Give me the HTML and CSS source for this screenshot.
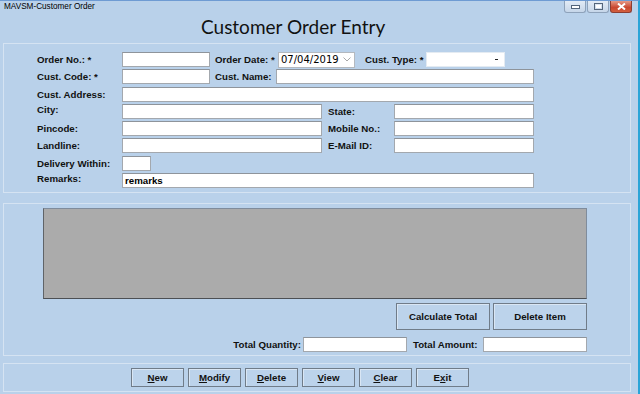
FILE: index.html
```html
<!DOCTYPE html>
<html lang="en">
<head>
    <meta charset="UTF-8">
    <title>MAVSM-Customer Order</title>
    <link rel="stylesheet" href="styles.css">
</head>
<body>

<div class="window">
    <div class="titlebar">
        <span class="caption">MAVSM-Customer Order</span>
        <div class="controls">
            <span class="ctl">
                <svg width="9" height="4" viewBox="0 0 9 4"><rect x="0.5" y="0.5" width="8" height="3" fill="#fff" stroke="#54657a"/></svg>
            </span>
            <span class="ctl">
                <svg width="9" height="7" viewBox="0 0 9 7"><rect x="0.5" y="0.5" width="8" height="6" fill="none" stroke="#54657a"/><rect x="2" y="2" width="5" height="3" fill="#fff"/></svg>
            </span>
            <span class="ctl close">
                <svg width="9" height="7" viewBox="0 0 9 7"><path d="M1 0.5 L8 6.5 M8 0.5 L1 6.5" stroke="#fff" stroke-width="2"/></svg>
            </span>
        </div>
    </div>

    <h1 class="heading">Customer Order Entry</h1>

    <!-- customer details -->
    <div class="group details">
        <div class="row">
            <label class="lbl w85">Order No.: *</label>
            <input class="box w88" type="text">
            <label class="lbl ml5 w63">Order Date: *</label>
            <div class="date">
                <span>07/04/2019</span>
                <svg width="8" height="5" viewBox="0 0 8 5"><path d="M0.5 0.5 L4 4 L7.5 0.5" fill="none" stroke="#a8a8a8"/></svg>
            </div>
            <label class="lbl ml10 w61">Cust. Type: *</label>
            <div class="combo"><span class="arrow"></span></div>
        </div>
        <div class="row">
            <label class="lbl w85">Cust. Code: *</label>
            <input class="box w88" type="text">
            <label class="lbl ml5 w61">Cust. Name:</label>
            <input class="box w258" type="text">
        </div>
        <div class="row">
            <label class="lbl w85">Cust. Address:</label>
            <input class="box w412" type="text">
        </div>
        <div class="row">
            <label class="lbl w85 up">City:</label>
            <input class="box w200" type="text">
            <label class="lbl ml6 w66">State:</label>
            <input class="box w140" type="text">
        </div>
        <div class="row">
            <label class="lbl w85">Pincode:</label>
            <input class="box w200" type="text">
            <label class="lbl ml6 w66">Mobile No.:</label>
            <input class="box w140" type="text">
        </div>
        <div class="row">
            <label class="lbl w85">Landline:</label>
            <input class="box w200" type="text">
            <label class="lbl ml6 w66">E-Mail ID:</label>
            <input class="box w140" type="text">
        </div>
        <div class="row">
            <label class="lbl w85">Delivery Within:</label>
            <input class="box w29" type="text">
        </div>
        <div class="row">
            <label class="lbl w85 up">Remarks:</label>
            <input class="box w412 filled" type="text" value="remarks">
        </div>
    </div>

    <!-- order items -->
    <div class="group items">
        <div class="grid"></div>
        <div class="item-buttons">
            <button class="btn wide">Calculate Total</button>
            <button class="btn wide">Delete Item</button>
        </div>
        <div class="totals">
            <label class="lbl">Total Quantity:</label>
            <input class="box w104" type="text">
            <label class="lbl ml6 w70">Total Amount:</label>
            <input class="box w104" type="text">
        </div>
    </div>

    <!-- actions -->
    <div class="group actions">
        <button class="btn"><u>N</u>ew</button>
        <button class="btn"><u>M</u>odify</button>
        <button class="btn"><u>D</u>elete</button>
        <button class="btn"><u>V</u>iew</button>
        <button class="btn"><u>C</u>lear</button>
        <button class="btn">E<u>x</u>it</button>
    </div>
</div>

</body>
</html>
```

FILE: styles.css
```css
body {
    margin: 0;
    background-color: #ffffff;
    font-family: "Liberation Sans", Arial, sans-serif;
}
.window {
    width: 640px;
    height: 394px;
    box-sizing: border-box;
    background-color: #b9d1ea; /* fondo de la ventana */
    border-top: 1px solid #6e9bd3;
    border-right: 2px solid #2ba4d7;
    overflow: hidden;
}
.titlebar {
    display: flex;
    justify-content: space-between;
    align-items: flex-start;
    height: 14px;
    padding: 0 6px 0 4px;
}
.caption {
    font-size: 8.2px;
    line-height: 12px;
    color: #000;
}
.controls {
    display: flex;
    gap: 1px;
}
.ctl {
    width: 22px;
    height: 12px;
    box-sizing: border-box;
    display: flex;
    justify-content: center;
    align-items: center;
    border: 1px solid #8ea2ba;
    border-top: none;
    border-radius: 0 0 3px 3px;
    background: linear-gradient(#e2ebf5, #c6d6e9);
}
.ctl.close {
    border-color: #8b3e33;
    background: linear-gradient(#e59a88, #c9472f 60%, #d3603f);
}
.heading {
    margin: 0;
    height: 28px;
    padding-left: 201px;
    font-family: Lato, "Open Sans", sans-serif;
    font-weight: normal;
    font-size: 19px;
    line-height: 24px;
    color: #111;
}
.group {
    margin-left: 3px;
    width: 628px;
    box-sizing: border-box;
    border: 1px solid #d5e3f2;
}
.details {
    height: 150px;
    padding: 8px 0 0 33px;
    display: flex;
    flex-direction: column;
    gap: 2.3px;
}
.row {
    display: flex;
    align-items: center;
    height: 15px;
}
.lbl {
    font-size: 9.7px;
    font-weight: bold;
    color: #111;
    white-space: nowrap;
}
.lbl.up {
    position: relative;
    top: -2px;
}
.box {
    height: 15px;
    box-sizing: border-box;
    margin: 0;
    padding: 0 2px;
    border: 1px solid #a3a8ae;
    border-top-color: #8e949b;
    background-color: #fff;
    font-family: "Liberation Sans", Arial, sans-serif;
    font-size: 9.7px;
    font-weight: bold;
    color: #000;
    outline: none;
}
.w29 { width: 29px; }
.w61 { width: 61px; }
.w63 { width: 63px; }
.w66 { width: 66px; }
.w70 { width: 70px; }
.w85 { width: 85px; }
.w88 { width: 88px; }
.w104 { width: 104px; }
.w140 { width: 140px; }
.w200 { width: 200px; }
.w258 { width: 258px; }
.w412 { width: 412px; }
.ml5 { margin-left: 5px; }
.ml6 { margin-left: 6px; }
.ml10 { margin-left: 10px; }
.date {
    width: 77px;
    height: 16px;
    box-sizing: border-box;
    display: flex;
    align-items: center;
    justify-content: space-between;
    padding: 0 3px 0 2px;
    border: 1px solid #b4b9bf;
    background-color: #fff;
    font-family: "DejaVu Sans", sans-serif;
    font-size: 10px;
    color: #000;
}
.combo {
    width: 79px;
    height: 15px;
    box-sizing: border-box;
    display: flex;
    justify-content: flex-end;
    align-items: center;
    padding-right: 6px;
    border: 1px solid #e4ebf2;
    background-color: #fff;
}
.combo .arrow {
    width: 3px;
    height: 1px;
    background-color: #222;
}
.items {
    margin-top: 10px;
    height: 153px;
    padding: 4px 0 0 39px;
}
.grid {
    width: 544px;
    height: 91px;
    box-sizing: border-box;
    background-color: #ababab;
    border: 1px solid #7f8c9c;
    border-left-color: #5f6368;
    border-bottom-color: #4d5054;
}
.item-buttons {
    width: 544px;
    display: flex;
    justify-content: flex-end;
    gap: 3px;
    margin-top: 4px;
}
.btn {
    width: 53px;
    height: 19px;
    box-sizing: border-box;
    margin: 0;
    padding: 0;
    border: 1px solid #707c89;
    background-color: #bcd3eb;
    box-shadow: inset 1px 1px 0 #d9e6f4;
    font-family: "Liberation Sans", Arial, sans-serif;
    font-size: 9.7px;
    font-weight: bold;
    color: #111;
}
.btn.wide {
    width: 94px;
    height: 27px;
}
.totals {
    width: 544px;
    display: flex;
    justify-content: flex-end;
    align-items: center;
    margin-top: 7px;
}
.totals .lbl:first-child {
    margin-right: 2px;
}
.actions {
    margin-top: 7px;
    height: 29px;
    padding: 4px 0 0 127px;
    display: flex;
    gap: 4px;
}
```
